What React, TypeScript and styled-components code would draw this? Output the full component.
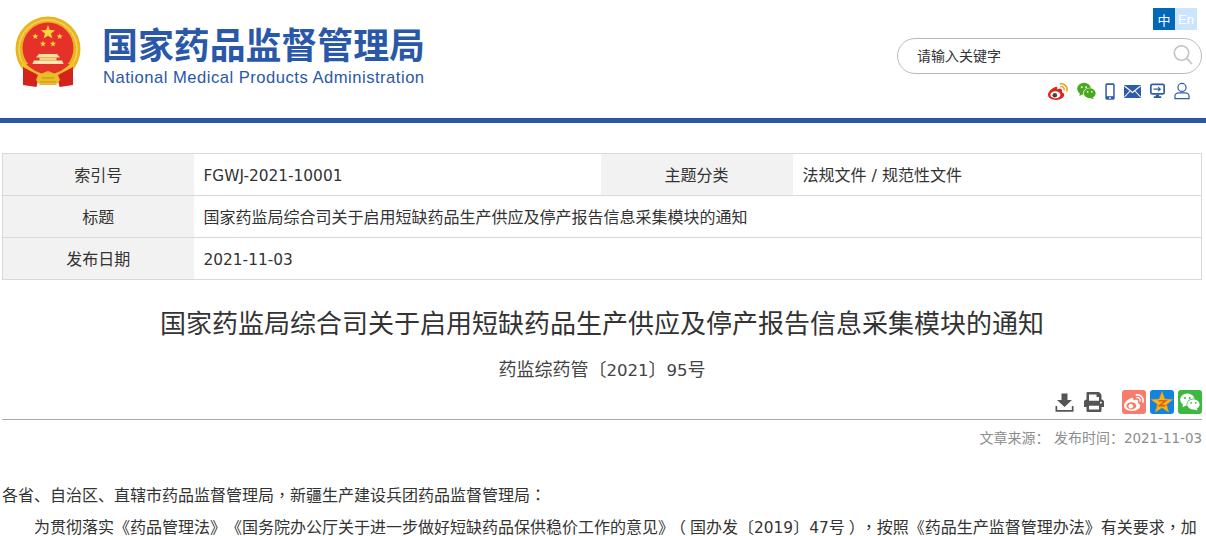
import React from 'react'
import styled, { createGlobalStyle } from 'styled-components'
import { FaPrint } from 'react-icons/fa'

const CN = `"DejaVu Sans", "Noto Sans CJK SC", sans-serif`

const GlobalStyle = createGlobalStyle`
  html, body {
    margin: 0;
    height: 536px;
    overflow: hidden;
    background: #fff;
    font-family: ${CN};
    color: #333;
    text-spacing-trim: space-all;
  }
`

const Header = styled.header`
  display: flex;
  justify-content: space-between;
  height: 118px;
  padding: 8px 4px 0 15px;
  box-sizing: border-box;
`

const Brand = styled.div`
  display: flex;
  align-items: flex-start;
  gap: 21px;
  padding-top: 8px;
`

const BrandText = styled.div`
  display: flex;
  flex-direction: column;
  margin-top: 6px;
  color: #2a58a8;
`

const BrandName = styled.div`
  font-family: "Noto Sans CJK SC", sans-serif;
  font-size: 35.9px;
  font-weight: 700;
  line-height: 42px;
  white-space: nowrap;
`

const BrandEnglish = styled.div`
  font-family: "Liberation Sans", sans-serif;
  font-size: 16.6px;
  line-height: 20px;
  letter-spacing: 0.5px;
  margin: 4px 0 0 1px;
  white-space: nowrap;
`

const Tools = styled.div`
  display: flex;
  flex-direction: column;
  align-items: flex-end;
`

const LangSwitch = styled.div`
  display: flex;
  margin-right: 5px;
`

const Lang = styled.span<{ $active?: boolean }>`
  width: 22px;
  height: 22px;
  display: flex;
  align-items: center;
  justify-content: center;
  font-size: 13px;
  font-family: "Liberation Sans", "Noto Sans CJK SC", sans-serif;
  color: #fff;
  background: ${({ $active }) => ($active ? '#0068b7' : '#cce5ff')};
`

const Search = styled.div`
  width: 305px;
  height: 36px;
  margin-top: 8px;
  box-sizing: border-box;
  border: 1px solid #bbb;
  border-radius: 18px;
  display: flex;
  align-items: center;
  justify-content: space-between;
  padding: 0 8px 2px 19px;
  font-size: 14px;
  color: #333;
`

const LinkIcons = styled.div`
  display: flex;
  align-items: center;
  height: 18px;
  margin-top: 8px;
  gap: 9px;
  margin-right: 12px;
`

const HeaderRule = styled.div`
  height: 5px;
  background: #2a56a6;
`

const Content = styled.main`
  padding: 30px 4px 0 2px;
`

const InfoTable = styled.table`
  width: 1200px;
  table-layout: fixed;
  border-collapse: collapse;
  border: 1px solid #d9d9d9;
  font-size: 16px;
  line-height: 22px;
  color: #333;

  td {
    height: 42px;
    padding: 2px 0 0;
    box-sizing: border-box;
    border-bottom: 1px solid #d9d9d9;
  }
`

const Column = styled.col<{ $width?: number }>`
  width: ${({ $width }) => ($width ? `${$width}px` : 'auto')};
`

const LabelCell = styled.td`
  background: #f2f2f2;
  text-align: center;
`

const ValueCell = styled.td`
  padding-left: 10px !important;
`

const Num = styled.span<{ $scale?: number }>`
  font-size: ${({ $scale }) => $scale ?? 0.96}em;
  line-height: 1;
`

const ArticleTitle = styled.h1`
  margin: 26px 0 0;
  font-size: 26px;
  font-weight: 400;
  line-height: 36px;
  text-align: center;
  color: #333;
`

const DocNumber = styled.div`
  margin-top: 14px;
  font-size: 18px;
  line-height: 28px;
  text-align: center;
  color: #444;
`

const ShareBar = styled.div`
  display: flex;
  justify-content: flex-end;
  align-items: center;
  gap: 4px;
  height: 24px;
  margin-top: 6px;
  padding-bottom: 5px;
  border-bottom: 1px solid #a8a8a8;
`

const PlainAction = styled.span<{ $after: number }>`
  width: 22px;
  height: 24px;
  margin-right: ${({ $after }) => $after}px;
  display: flex;
  align-items: center;
  justify-content: center;
  color: #555;
`

const ShareTile = styled.span<{ $bg: string }>`
  width: 24px;
  height: 24px;
  border-radius: 3px;
  display: flex;
  align-items: center;
  justify-content: center;
  background: ${({ $bg }) => $bg};
`

const SourceLine = styled.div`
  margin-top: 8px;
  font-size: 14px;
  line-height: 20px;
  text-align: right;
  color: #8c8c8c;
`

const Body = styled.article`
  margin-top: 32px;
  font-size: 16px;
  line-height: 32px;
  color: #333;
`

const Paragraph = styled.p<{ $indent?: boolean }>`
  margin: 0;
  height: 32px;
  white-space: nowrap;
  text-indent: ${({ $indent }) => ($indent ? '32px' : '0')};
`

// comma and colon sit in the middle of their cell in the original font
const MidMark = styled.span`
  font-family: "Noto Sans CJK TC", sans-serif;
  line-height: 1;
`

// half width glyph with equal room on both sides, so the bracket is centred
const Paren = styled.span`
  font-feature-settings: "halt";
  padding: 0 4px;
  line-height: 1;
`

const starPoints = (cx: number, cy: number, r: number) =>
  Array.from({ length: 10 }, (_, i) => {
    const radius = i % 2 === 0 ? r : r * 0.42
    const angle = -Math.PI / 2 + (i * Math.PI) / 5
    return `${(cx + radius * Math.cos(angle)).toFixed(2)},${(cy + radius * Math.sin(angle)).toFixed(2)}`
  }).join(' ')

function Emblem() {
  return (
    <svg width="66" height="71" viewBox="0 0 66 71">
      <circle cx="33" cy="33" r="32.5" fill="#e8b422" />
      <circle cx="33" cy="33" r="29" fill="none" stroke="#f5d35a" strokeWidth="1.5" />
      <circle cx="33" cy="32" r="25.5" fill="#e6312a" />
      <polygon points={starPoints(33, 16.5, 7.5)} fill="#f8d53c" />
      <polygon points={starPoints(20.3, 20.5, 3.2)} fill="#f8d53c" />
      <polygon points={starPoints(44.7, 20.5, 3.2)} fill="#f8d53c" />
      <polygon points={starPoints(28, 27.8, 3.2)} fill="#f8d53c" />
      <polygon points={starPoints(38, 27.8, 3.2)} fill="#f8d53c" />
      <path d="M24 38 H42 L45 41.5 H21 Z" fill="#f7e2a0" />
      <rect x="24.5" y="41.5" width="17" height="3" fill="#f3d27a" />
      <path d="M19 44.5 H47 L49 49 H17 Z" fill="#f9e8b4" />
      <path d="M10 48 H56 Q48 59 33 59 Q18 59 10 48 Z" fill="#e6312a" />
      <path d="M8 45 Q33 72 58 45 L60 49 Q33 74 6 49 Z" fill="#f2c12e" />
      <path d="M8 51 L24 59.5 L21.5 71 L8 69 Z" fill="#d5231b" />
      <path d="M58 51 L42 59.5 L44.5 71 L58 69 Z" fill="#d5231b" />
      <path d="M23 59 L33 55 L43 59 L45 64 L41 69 H25 L21 64 Z" fill="#ecbb2a" />
      <path d="M27 62 H39 M25 66 H41" stroke="#c98f14" strokeWidth="1" />
    </svg>
  )
}

function SearchGlyph() {
  return (
    <svg width="20" height="22" viewBox="0 0 20 22" fill="none" stroke="#c4c4c4">
      <circle cx="8.5" cy="9" r="7.2" strokeWidth="1.6" />
      <path d="M13.8 14.4 L19 20" strokeWidth="1.8" />
    </svg>
  )
}

function Weibo({ body, eye, pupil, arc }: { body: string; eye: string; pupil: string; arc: string }) {
  return (
    <svg width="20" height="17" viewBox="0 0 20 17">
      <path d="M7.6 4 C3.4 5.4 0 9 0 11.8 C0 15 3.8 17 8 17 C12.8 17 16.2 14.4 16.2 11.8 C16.2 10.2 14.6 9.4 13.8 9.2 C14.5 7.6 14.2 6.2 12.4 5.8 C11.2 5.6 9.8 6.2 9.2 6.6 C9.7 4.4 9 3.5 7.6 4 Z" fill={body} />
      <ellipse cx="7.4" cy="11.8" rx="5" ry="3.6" fill={eye} />
      <circle cx="6.8" cy="12.2" r="2.3" fill={pupil} />
      <path d="M12.4 0.9 C16.4 0.3 20 3.6 18.9 8" fill="none" stroke={arc} strokeWidth="1.6" strokeLinecap="round" />
      <path d="M12.8 3.6 C15 3.2 16.7 5 16.1 7" fill="none" stroke={arc} strokeWidth="1.4" strokeLinecap="round" />
    </svg>
  )
}

function Wechat({ body, dot, gapColor, width = 20 }: { body: string; dot: string; gapColor: string; width?: number }) {
  return (
    <svg width={width} height="18" viewBox="0 0 20 18">
      <ellipse cx="7.4" cy="6.6" rx="7.2" ry="6.2" fill={body} />
      <path d="M3 10.5 L2.6 14.2 L7 12 Z" fill={body} />
      <circle cx="5" cy="5" r="1" fill={dot} />
      <circle cx="9.6" cy="5" r="1" fill={dot} />
      <ellipse cx="13.4" cy="11.4" rx="6.9" ry="5.9" fill={gapColor} />
      <ellipse cx="13.4" cy="11.4" rx="6.2" ry="5.2" fill={body} />
      <path d="M16.4 15 L17.6 17.8 L13.4 16 Z" fill={body} />
      <circle cx="11.2" cy="9.8" r="0.9" fill={dot} />
      <circle cx="15.6" cy="9.8" r="0.9" fill={dot} />
    </svg>
  )
}

function Phone() {
  return (
    <svg width="10" height="17" viewBox="0 0 10 17">
      <rect x="0.3" y="0.3" width="9.4" height="16.4" rx="1.6" fill="#2f5ca8" />
      <rect x="1.8" y="2" width="6.4" height="11.2" fill="#fff" />
      <circle cx="5" cy="15" r="0.9" fill="#fff" />
    </svg>
  )
}

function Mail() {
  return (
    <svg width="17" height="13" viewBox="0 0 17 13">
      <rect width="17" height="13" rx="1" fill="#2f5ca8" />
      <path d="M0.5 1 L8.5 7.5 L16.5 1 M0.5 12 L6 6 M16.5 12 L11 6" fill="none" stroke="#fff" strokeWidth="1.1" />
    </svg>
  )
}

function Screen() {
  return (
    <svg width="15" height="16" viewBox="0 0 16 16">
      <rect x="0.9" y="0.9" width="14.2" height="10.2" rx="1.6" fill="#fff" stroke="#2f5ca8" strokeWidth="1.8" />
      <path d="M3.8 6 H10.8 M8.6 3.9 L11 6 L8.6 8.1" fill="none" stroke="#2f5ca8" strokeWidth="1.2" />
      <path d="M6.2 12 H9.8 V13.6 H12 V15.4 H4 V13.6 H6.2 Z" fill="#2f5ca8" />
    </svg>
  )
}

function User() {
  return (
    <svg width="16" height="18" viewBox="0 0 17 18" fill="none" stroke="#2f5ca8" strokeWidth="1.3">
      <circle cx="8.5" cy="5.2" r="4.3" />
      <path d="M1 17.2 V14.6 C1 12.2 3.2 11 5 11 H12 C13.8 11 16 12.2 16 14.6 V17.2 Z" />
    </svg>
  )
}

function Download() {
  return (
    <svg width="19" height="19" viewBox="0 0 19 19" fill="#555">
      <path d="M6.5 0.5 H12.5 V7 H17 L9.5 14 L2 7 H6.5 Z" />
      <path d="M0.5 13 H2.2 V17 H16.8 V13 H18.5 V18.7 H0.5 Z" />
    </svg>
  )
}

function QZone() {
  return (
    <svg width="24" height="24" viewBox="0 0 24 24">
      <polygon points={starPoints(12, 13, 11.5)} fill="#f7b417" stroke="#e58a10" strokeWidth="0.5" />
      <path d="M8.5 10.8 H15.5 L9.5 15.6 H15.5" fill="none" stroke="#e0601a" strokeWidth="1.6" />
    </svg>
  )
}

export default function App() {
  return (
    <>
      <GlobalStyle />
      <Header>
        <Brand>
          <Emblem />
          <BrandText>
            <BrandName>国家药品监督管理局</BrandName>
            <BrandEnglish>National Medical Products Administration</BrandEnglish>
          </BrandText>
        </Brand>
        <Tools>
          <LangSwitch>
            <Lang $active>中</Lang>
            <Lang>En</Lang>
          </LangSwitch>
          <Search>
            <span>请输入关键字</span>
            <SearchGlyph />
          </Search>
          <LinkIcons>
            <Weibo body="#e2231a" eye="#fff" pupil="#444" arc="#f0a020" />
            <Wechat body="#4aa81c" dot="#fff" gapColor="#fff" width={19} />
            <Phone />
            <Mail />
            <Screen />
            <User />
          </LinkIcons>
        </Tools>
      </Header>
      <HeaderRule />
      <Content>
        <InfoTable>
          <colgroup>
            <Column $width={191} />
            <Column $width={407} />
            <Column $width={192} />
            <Column />
          </colgroup>
          <tbody>
            <tr>
              <LabelCell>索引号</LabelCell>
              <ValueCell><Num>FGWJ-2021-10001</Num></ValueCell>
              <LabelCell>主题分类</LabelCell>
              <ValueCell>法规文件 / 规范性文件</ValueCell>
            </tr>
            <tr>
              <LabelCell>标题</LabelCell>
              <ValueCell colSpan={3}>国家药监局综合司关于启用短缺药品生产供应及停产报告信息采集模块的通知</ValueCell>
            </tr>
            <tr>
              <LabelCell>发布日期</LabelCell>
              <ValueCell colSpan={3}><Num>2021-11-03</Num></ValueCell>
            </tr>
          </tbody>
        </InfoTable>
        <ArticleTitle>国家药监局综合司关于启用短缺药品生产供应及停产报告信息采集模块的通知</ArticleTitle>
        <DocNumber>药监综药管〔<Num $scale={0.92}>2021</Num>〕<Num $scale={0.92}>95</Num>号</DocNumber>
        <ShareBar>
          <PlainAction $after={3.5}><Download /></PlainAction>
          <PlainAction $after={13.5}><FaPrint size={20} /></PlainAction>
          <ShareTile $bg="#f87b6c"><Weibo body="#fff" eye="#f87b6c" pupil="#fff" arc="#fff" /></ShareTile>
          <ShareTile $bg="#0f84e0"><QZone /></ShareTile>
          <ShareTile $bg="#3cb93f"><Wechat body="#fff" dot="#3cb93f" gapColor="#3cb93f" /></ShareTile>
        </ShareBar>
        <SourceLine>文章来源： 发布时间：<Num>2021-11-03</Num></SourceLine>
        <Body>
          <Paragraph>各省、自治区、直辖市药品监督管理局<MidMark>，</MidMark>新疆生产建设兵团药品监督管理局<MidMark>：</MidMark></Paragraph>
          <Paragraph $indent>为贯彻落实《药品管理法》《国务院办公厅关于进一步做好短缺药品保供稳价工作的意见》<Paren>（</Paren>国办发〔<Num>2019</Num>〕<Num>47</Num>号<Paren>）</Paren><MidMark>，</MidMark>按照《药品生产监督管理办法》有关要求<MidMark>，</MidMark>加</Paragraph>
        </Body>
      </Content>
    </>
  )
}
